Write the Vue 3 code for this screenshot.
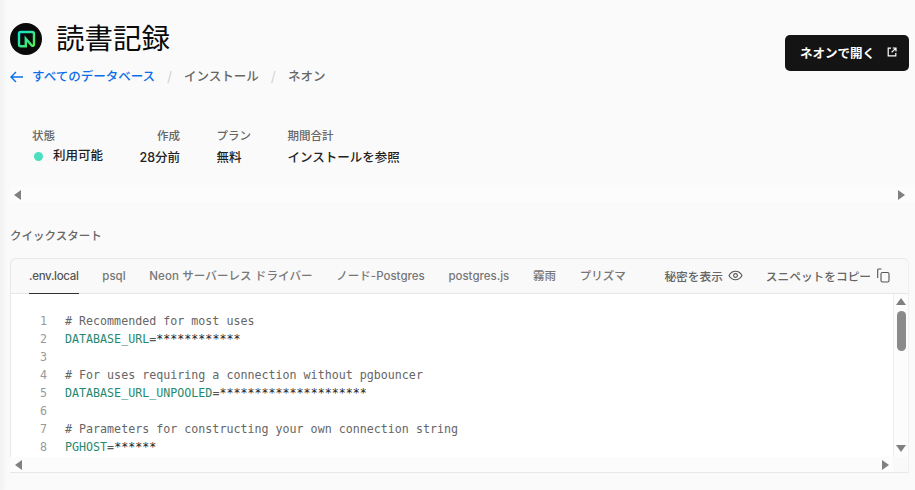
<script setup>
const crumbs = ['インストール', 'ネオン']
const meta = [
  { label: '状態', value: '利用可能', status: true },
  { label: '作成', value: '28分前', right: true },
  { label: 'プラン', value: '無料' },
  { label: '期間合計', value: 'インストールを参照' },
]
const tabs = ['.env.local', 'psql', 'Neon サーバーレス ドライバー', 'ノード-Postgres', 'postgres.js', '霧雨', 'プリズマ']
const lines = [
  { c: '# Recommended for most uses' },
  { k: 'DATABASE_URL', v: '************' },
  {},
  { c: '# For uses requiring a connection without pgbouncer' },
  { k: 'DATABASE_URL_UNPOOLED', v: '*********************' },
  {},
  { c: '# Parameters for constructing your own connection string' },
  { k: 'PGHOST', v: '******' },
]
</script>

<template>
  <div class="page">
    <header class="head">
      <div>
        <div class="title-row">
          <svg class="logo" width="32" height="32" viewBox="0 0 32 32">
            <defs>
              <linearGradient id="neon" x1="0" y1="0" x2="1" y2="1">
                <stop offset="0" stop-color="#10e0d0" />
                <stop offset="1" stop-color="#55ee50" />
              </linearGradient>
            </defs>
            <circle cx="16" cy="16" r="16" fill="#0a0a0a" />
            <path d="M9 21.500V10.800Q9 9 10.800 9H22Q24 9 24 10.800V21Q24 23.500 21.500 22.300L15.800 15.800V23.300H10.800Q9 23.300 9 21.500Z" fill="none" stroke="url(#neon)" stroke-width="2.400" />
          </svg>
          <h1>読書記録</h1>
        </div>
        <nav class="crumbs">
          <a class="back">
            <svg width="14" height="12" viewBox="0 0 14 12"><path d="M13 6H1.200M6 1 1 6l5 5" fill="none" stroke="#0a6fe8" stroke-width="1.400" /></svg>
            すべてのデータベース
          </a>
          <template v-for="c in crumbs" :key="c">
            <span class="slash">/</span>
            <span class="crumb">{{ c }}</span>
          </template>
        </nav>
      </div>
      <button class="open">
        ネオンで開く
        <svg width="10" height="10" viewBox="0 0 10 10"><path d="M4 1.200H1.200v7.600h7.600V6M5.600 1H9v3.400M9 1 4.600 5.400" fill="none" stroke="#fff" stroke-width="1.200" /></svg>
      </button>
    </header>

    <section class="meta">
      <div v-for="m in meta" :key="m.label" class="cell" :class="{ right: m.right }">
        <div class="label">{{ m.label }}</div>
        <div class="value" :class="{ status: m.status }"><i v-if="m.status" class="dot"></i>{{ m.value }}</div>
      </div>
    </section>
    <div class="hbar meta-bar"><i class="arrow left"></i><i class="arrow right"></i></div>

    <h2 class="section">クイックスタート</h2>

    <section class="card">
      <div class="tabs">
        <span v-for="(t, i) in tabs" :key="t" class="tab" :class="{ active: i === 0 }">{{ t }}</span>
        <span class="action reveal">秘密を表示
          <svg width="15" height="15" viewBox="0 0 15 15"><path d="M1 7.500C2.500 4.800 4.600 3.300 7.500 3.300S12.500 4.800 14 7.500C12.500 10.200 10.400 11.700 7.500 11.700S2.500 10.200 1 7.500Z" fill="none" stroke="#555" stroke-width="1.100" /><circle cx="7.500" cy="7.500" r="1.900" fill="none" stroke="#555" stroke-width="1.100" /></svg>
        </span>
        <span class="action">スニペットをコピー
          <svg width="13" height="15" viewBox="0 0 13 15"><path d="M4.500 1H1.500Q.7 1 .7 1.800V10" fill="none" stroke="#555" stroke-width="1.100" /><rect x="4" y="4.500" width="8" height="9.500" rx="1.500" fill="none" stroke="#555" stroke-width="1.100" /></svg>
        </span>
      </div>
      <div class="body">
        <div class="code">
          <div v-for="(l, i) in lines" :key="i" class="line">
            <span class="num">{{ i + 1 }}</span>
            <span v-if="l.c" class="comment">{{ l.c }}</span>
            <span v-if="l.k"><span class="key">{{ l.k }}</span><span class="eq">=</span><span class="val">{{ l.v }}</span></span>
          </div>
        </div>
        <div class="vbar">
          <i class="arrow up"></i>
          <i class="thumb"></i>
          <i class="arrow down"></i>
        </div>
      </div>
      <div class="hbar code-bar"><i class="arrow left"></i><i class="arrow right"></i></div>
    </section>
  </div>
</template>

<style>
html, body { margin: 0; background: #fafafa; overflow: hidden; }
</style>

<style scoped>
.page {
  width: 915px;
  height: 490px;
  box-sizing: border-box;
  padding: 23px 6px 0 10px;
  background: linear-gradient(90deg, #f2f2f2 0, #fafafa 7px);
  font-family: Inter, "Noto Sans CJK JP", sans-serif;
  color: #111;
  overflow: hidden;
}
.head { display: flex; justify-content: space-between; align-items: flex-start; }
.title-row { display: flex; align-items: center; gap: 14px; height: 32px; }
.logo { display: block; margin-right: 1px; }
h1 { margin: 0 0 0 -1px; font-size: 28.500px; font-weight: 400; line-height: 32px; color: #0a0a0a; }
.crumbs { display: flex; align-items: center; margin-top: 13px; font-size: 12.500px; line-height: 18px; color: #666; font-weight: 500; }
.back { display: flex; align-items: center; gap: 8px; color: #0a6fe8; }
.slash { margin: 0 12px; color: #d4d4d4; font-weight: 400; font-size: 14px; }
.open {
  margin-top: 12px;
  width: 124px;
  height: 36px;
  border: 0;
  border-radius: 5px;
  background: #141414;
  color: #fff;
  font: 700 12.500px Inter, "Noto Sans CJK JP", sans-serif;
  display: flex;
  align-items: center;
  gap: 12px;
  padding: 0 0 2px 15px;
}
.meta { display: flex; margin-top: 42px; padding-left: 22px; height: 59px; }
.cell { margin-right: 36.500px; }
.label { font-size: 11.500px; line-height: 16px; color: #666; font-weight: 500; }
.value { font-size: 12.500px; line-height: 18px; margin-top: 5px; color: #222; font-weight: 500; }
.right { text-align: right; }
.value.status { display: flex; align-items: center; gap: 10px; margin-top: 3px; }
.dot { width: 9px; height: 9px; margin-left: 2px; border-radius: 50%; background: #4bdfc0; }
.hbar { display: flex; justify-content: space-between; align-items: center; height: 15px; background: #fcfcfc; }
.meta-bar { margin-right: -6px; padding: 0 10px 0 4px; }
.code-bar { padding: 0 4px 0 5px; margin: 0 15px 0 -1px; flex: none; }
.arrow { display: block; width: 0; height: 0; border: 5px solid transparent; }
.arrow.left { border-left: 0; border-right: 7px solid #808080; }
.arrow.right { border-right: 0; border-left: 7px solid #808080; }
.arrow.up { border-top: 0; border-bottom: 7px solid #808080; }
.arrow.down { border-bottom: 0; border-top: 7px solid #808080; position: absolute; bottom: 5px; }
.section { margin: 26px 0 14px; font-size: 11.500px; line-height: 16px; font-weight: 500; color: #666; }
.card {
  height: 215px;
  box-sizing: border-box;
  border: 1px solid #e8e8e8;
  border-right-color: #f0f0f0;
  border-radius: 6px 6px 0 0;
  background: #f9f9f9;
  display: flex;
  flex-direction: column;
}
.tabs { display: flex; align-items: stretch; box-sizing: border-box; height: 35px; flex: none; border-bottom: 1px solid #e6e6e6; padding-left: 18px; font-size: 11.500px; color: #777; font-weight: 500; }
.tab { height: 35px; line-height: 34px; box-sizing: border-box; margin-right: 23.700px; white-space: nowrap; }
.tab:nth-child(1) { letter-spacing: -.3px; }
.tab:nth-child(3) { letter-spacing: .1px; }
.tab.active { color: #555; border-bottom: 1px solid #333; }
.action { display: flex; align-items: center; gap: 6px; height: 32px; font-size: 11.700px; color: #666; white-space: nowrap; }
.reveal { gap: 5px; margin-left: 15px; margin-right: 23px; }
.body { display: flex; height: 163px; flex: none; background: #fff; }
.code { flex: 1; padding-top: 18px; font: 11.670px/18px "DejaVu Sans Mono", monospace; overflow: hidden; }
.line { height: 18px; display: flex; white-space: pre; }
.num { width: 36px; text-align: right; margin-right: 18px; color: #999; }
.comment { color: #666; }
.key { color: #1f8a70; }
.eq { color: #555; }
.val { color: #222; }
.vbar { position: relative; width: 14px; flex: none; border-left: 1px solid #eee; background: #fcfcfc; display: flex; flex-direction: column; align-items: center; padding-top: 4px; }
.thumb { display: block; width: 9px; height: 40px; margin-top: 6px; border-radius: 5px; background: #8a8a8a; }
</style>
